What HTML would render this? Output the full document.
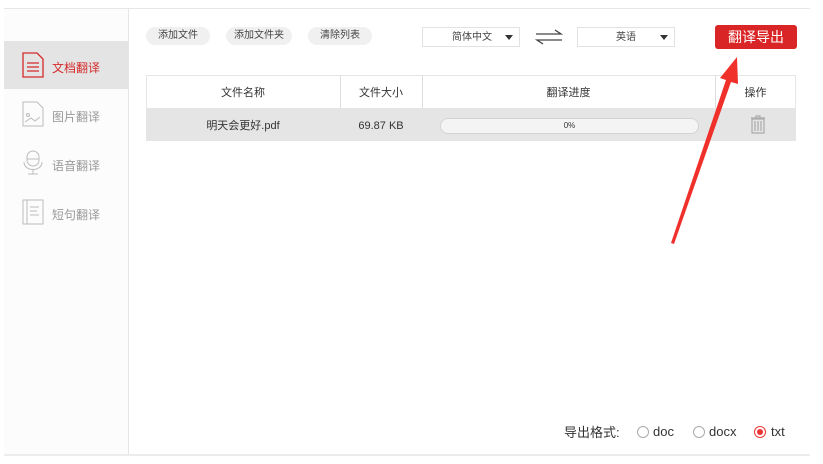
<!DOCTYPE html>
<html><head><meta charset="utf-8"><style>
*{margin:0;padding:0;box-sizing:border-box}
body{width:823px;height:464px;background:#fff;position:relative;overflow:hidden;font-family:"Liberation Sans","Noto Sans CJK SC",sans-serif;color:#333}
.a{position:absolute}
.btn{position:absolute;top:27px;height:18px;border-radius:9px;background:#f0f0f0;font-size:10px;color:#444;text-align:center;line-height:1;padding-top:4px}
.sel{position:absolute;top:27px;height:20px;border:1px solid #e2e2e2;background:#fff;font-size:10px;line-height:1;color:#444}
.sel span{position:absolute;top:5px}
.tri{position:absolute;right:6px;top:7px;width:0;height:0;border-left:4px solid transparent;border-right:4px solid transparent;border-top:5px solid #333}
.nav{position:absolute;left:4px;width:124px;height:48px;font-size:12px;color:#999}
.nav span{position:absolute;left:48px;top:18px}
.nav svg{position:absolute;left:18px;top:11px}
</style></head><body>
<div class="a" style="left:4px;top:8px;width:806px;height:1px;background:#e6e6e6"></div>
<div class="a" style="left:4px;top:9px;width:124px;height:446px;background:#fcfcfc"></div>
<div class="a" style="left:128px;top:9px;width:1px;height:446px;background:#e6e6e6"></div>
<div class="a" style="left:4px;top:454px;width:806px;height:2px;background:#ececec"></div>

<div class="nav" style="top:41px;background:#e4e4e4;color:#d42a2a"><svg width="22" height="26" viewBox="0 0 22 26"><path d="M1 1H15L21 7V25H1Z" fill="none" stroke="#d42a2a" stroke-width="1.3"/><path d="M5 11H17M5 15H17M5 19H17" stroke="#d42a2a" stroke-width="1.2"/></svg><span>文档翻译</span></div>
<div class="nav" style="top:90px"><svg width="22" height="26" viewBox="0 0 22 26"><path d="M1 1H15L21 7V25H1Z" fill="none" stroke="#bbb"/><circle cx="6" cy="14" r="1.5" fill="none" stroke="#bbb"/><path d="M3 21L9 17L13 20L18 16" fill="none" stroke="#bbb"/></svg><span>图片翻译</span></div>
<div class="nav" style="top:139px"><svg width="22" height="26" viewBox="0 0 22 26"><rect x="5" y="1" width="12" height="15" rx="6" fill="none" stroke="#bbb"/><path d="M5 9H17M2 12C2 22 20 22 20 12M11 19V24M6 24H16" fill="none" stroke="#bbb"/></svg><span>语音翻译</span></div>
<div class="nav" style="top:188px"><svg width="22" height="26" viewBox="0 0 22 26"><path d="M1 1H21V25H1ZM5 1V25" fill="none" stroke="#bbb"/><path d="M8 8H17M8 12H15M8 16H17" stroke="#bbb"/></svg><span>短句翻译</span></div>

<div class="btn" style="left:146px;width:64px">添加文件</div>
<div class="btn" style="left:226px;width:66px">添加文件夹</div>
<div class="btn" style="left:308px;width:64px">清除列表</div>
<div class="sel" style="left:422px;width:98px"><span style="left:29px">简体中文</span><i class="tri"></i></div>
<svg class="a" style="left:535px;top:29px" width="28" height="16" viewBox="0 0 28 16"><path d="M1 5H26L20 1M27 11H2L8 15" fill="none" stroke="#444" stroke-width="1.3"/></svg>
<div class="sel" style="left:577px;width:98px"><span style="left:38px">英语</span><i class="tri"></i></div>
<div class="a" style="left:715px;top:25px;width:82px;height:24px;background:#d92525;border-radius:3px;color:#fff;font-size:14px;text-align:center;line-height:1;padding-top:5px">翻译导出</div>

<div class="a" style="left:146px;top:75px;width:650px;height:1px;background:#e6e6e6"></div>
<div class="a" style="left:146px;top:75px;width:1px;height:33px;background:#e6e6e6"></div>
<div class="a" style="left:795px;top:75px;width:1px;height:33px;background:#e6e6e6"></div>
<div class="a" style="left:340px;top:75px;width:1px;height:66px;background:#ddd"></div>
<div class="a" style="left:422px;top:75px;width:1px;height:66px;background:#ddd"></div>
<div class="a" style="left:715px;top:75px;width:1px;height:66px;background:#ddd"></div>
<div class="a" style="left:146px;top:108px;width:650px;height:33px;background:#e5e5e5"></div>
<div class="a" style="left:146px;top:86px;width:194px;text-align:center;font-size:11px;line-height:14px">文件名称</div>
<div class="a" style="left:340px;top:86px;width:82px;text-align:center;font-size:11px;line-height:14px">文件大小</div>
<div class="a" style="left:422px;top:86px;width:293px;text-align:center;font-size:11px;line-height:14px">翻译进度</div>
<div class="a" style="left:715px;top:86px;width:81px;text-align:center;font-size:11px;line-height:14px">操作</div>
<div class="a" style="left:146px;top:119px;width:194px;text-align:center;font-size:11px;line-height:14px">明天会更好.pdf</div>
<div class="a" style="left:340px;top:119px;width:82px;text-align:center;font-size:11px;line-height:14px">69.87 KB</div>
<div class="a" style="left:440px;top:118px;width:259px;height:16px;border-radius:8px;background:#f4f4f4;border:1px solid #d4d4d4;text-align:center;font-size:8px;line-height:14px">0%</div>
<svg class="a" style="left:750px;top:115px" width="16" height="19" viewBox="0 0 16 19"><path d="M1 3H15M6 3V1H10V3M2 4H14V18H2ZM5 6V16M8 6V16M11 6V16" fill="none" stroke="#aaa" stroke-width="1.2"/></svg>

<svg class="a" style="left:0;top:0" width="823" height="464"><path d="M671 243L726 80L720 78L737 57L738 84L731 82L674 244Z" fill="#f0302a"/></svg>

<div class="a" style="left:564px;top:426px;font-size:13px;line-height:14px;color:#333">导出格式:</div>
<div class="a" style="left:637px;top:426px;width:12px;height:12px;border:1px solid #aaa;border-radius:50%"></div>
<div class="a" style="left:653px;top:425px;font-size:13px;line-height:14px">doc</div>
<div class="a" style="left:693px;top:426px;width:12px;height:12px;border:1px solid #aaa;border-radius:50%"></div>
<div class="a" style="left:709px;top:425px;font-size:13px;line-height:14px">docx</div>
<div class="a" style="left:754px;top:426px;width:12px;height:12px;border:1px solid #e33;border-radius:50%"><div style="position:absolute;left:2px;top:2px;width:6px;height:6px;border-radius:50%;background:#e33"></div></div>
<div class="a" style="left:771px;top:425px;font-size:13px;line-height:14px">txt</div>
</body></html>
